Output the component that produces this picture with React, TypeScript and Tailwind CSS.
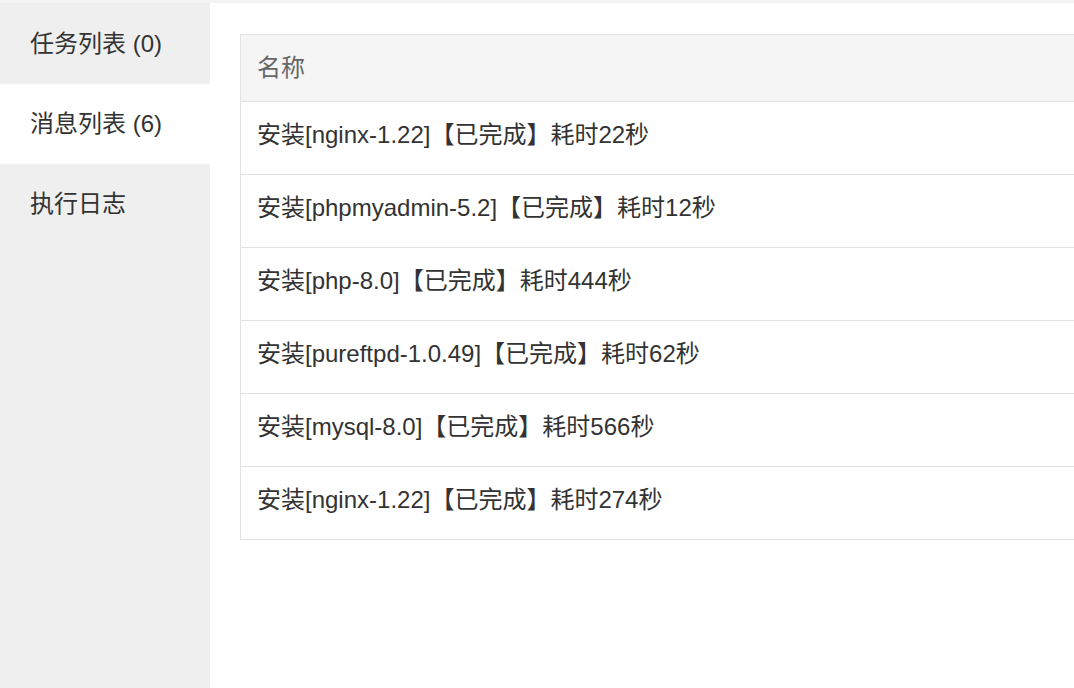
const tabs = [
  { label: '任务列表 (0)', active: false },
  { label: '消息列表 (6)', active: true },
  { label: '执行日志', active: false },
]

const messages = [
  '安装[nginx-1.22]【已完成】耗时22秒',
  '安装[phpmyadmin-5.2]【已完成】耗时12秒',
  '安装[php-8.0]【已完成】耗时444秒',
  '安装[pureftpd-1.0.49]【已完成】耗时62秒',
  '安装[mysql-8.0]【已完成】耗时566秒',
  '安装[nginx-1.22]【已完成】耗时274秒',
]

export default function App() {
  return (
    <div
      className="flex h-screen flex-col overflow-hidden bg-white text-[24px] text-[#333]"
      style={{ fontFamily: '"Liberation Sans", "Noto Sans CJK SC", sans-serif' }}
    >
      <div className="h-[3px] shrink-0 bg-[#f4f4f4]" />
      <div className="flex min-h-0 flex-1">
        {/* left tabs */}
        <div className="flex w-[210px] shrink-0 flex-col bg-[#efefef] pt-px">
          {tabs.map(t => (
            <div
              key={t.label}
              className={`flex h-20 items-center pl-[30px] ${t.active ? 'bg-white' : ''}`}
            >
              {t.label}
            </div>
          ))}
        </div>

        {/* message table */}
        <div className="min-w-0 flex-1 overflow-hidden pl-[30px] pt-[31px]">
          <div className="w-[900px] border border-[#e2e2e2]">
            <div className="flex h-[66px] items-center bg-[#f5f5f5] pl-4 text-[#666]">名称</div>
            {messages.map((m, i) => (
              <div key={i} className="flex h-[73px] items-center border-t border-[#e2e2e2] pl-4 pb-[6px]">
                {m}
              </div>
            ))}
          </div>
        </div>
      </div>
    </div>
  )
}
